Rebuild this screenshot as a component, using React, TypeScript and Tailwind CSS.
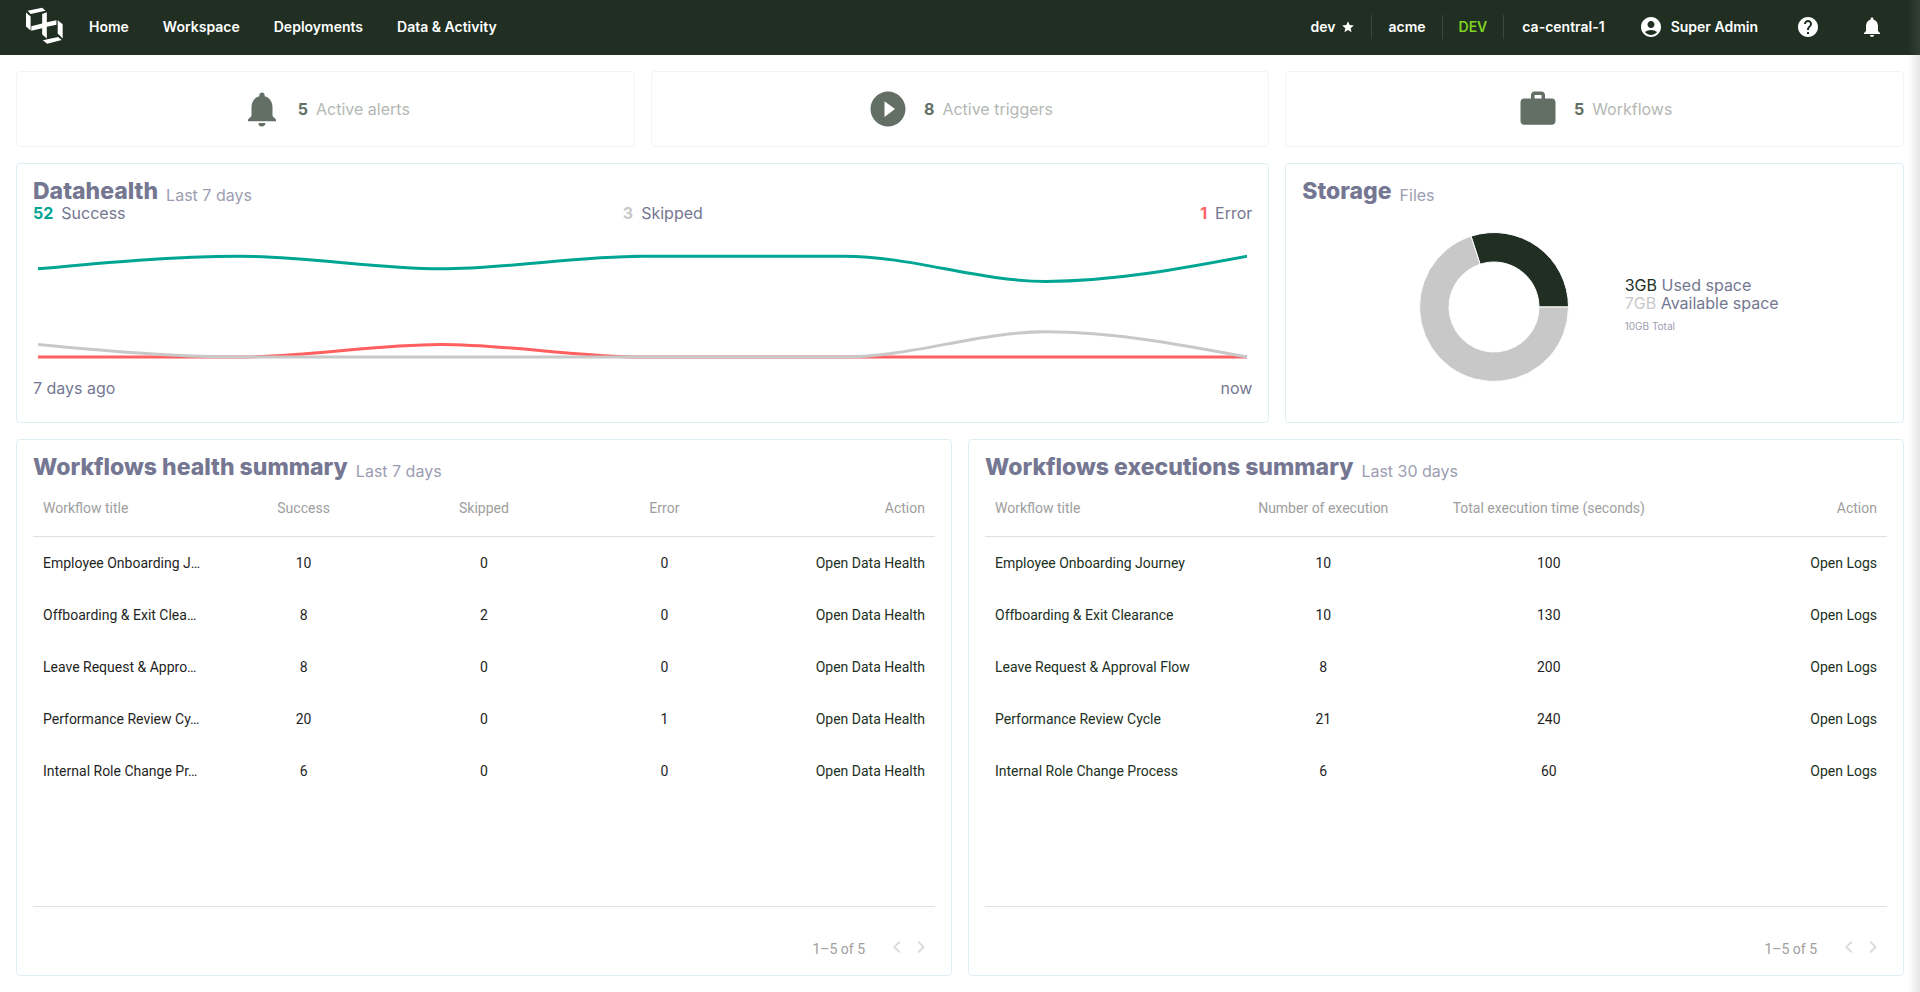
import type { ReactNode } from "react";
import {
    MdAccountCircle,
    MdHelp,
    MdKeyboardArrowLeft,
    MdKeyboardArrowRight,
    MdNotifications,
    MdPlayCircleFilled,
    MdStar,
    MdWork,
} from "react-icons/md";

const NAV_LINKS = ["Home", "Workspace", "Deployments", "Data & Activity"];

// Titles are shortened for the narrow first column
const HEALTH_ROWS = [
    { title: "Employee Onboarding J…", success: 10, skipped: 0, error: 0 },
    { title: "Offboarding & Exit Clea…", success: 8, skipped: 2, error: 0 },
    { title: "Leave Request & Appro…", success: 8, skipped: 0, error: 0 },
    { title: "Performance Review Cy…", success: 20, skipped: 0, error: 1 },
    { title: "Internal Role Change Pr…", success: 6, skipped: 0, error: 0 },
];

const EXECUTION_ROWS = [
    { title: "Employee Onboarding Journey", count: 10, seconds: 100 },
    { title: "Offboarding & Exit Clearance", count: 10, seconds: 130 },
    { title: "Leave Request & Approval Flow", count: 8, seconds: 200 },
    { title: "Performance Review Cycle", count: 21, seconds: 240 },
    { title: "Internal Role Change Process", count: 6, seconds: 60 },
];

const SERIES = [
    { name: "success", color: "#00a693", values: [7, 8, 7, 8, 8, 6, 8] },
    { name: "error", color: "#ff5f5f", values: [0, 0, 1, 0, 0, 0, 0] },
    { name: "skipped", color: "#c8c8c8", values: [1, 0, 0, 0, 0, 2, 0] },
];

const CHART_WIDTH = 1210;
const CHART_HEIGHT = 157;

// Monotone cubic through the daily values, so the curve never overshoots a point
function linePath(values: number[]) {
    const step = CHART_WIDTH / (values.length - 1);
    const pts = values.map((v, i) => ({ x: i * step, y: 135 - v * 12.6 }));
    const slopes = pts.slice(1).map((p, i) => (p.y - pts[i].y) / step);
    const tangents = pts.map((_, i) => {
        if (i === 0 || i === pts.length - 1) return 0;
        const a = slopes[i - 1];
        const b = slopes[i];
        if (a * b <= 0) return 0;
        return Math.sign(a) * Math.min(Math.abs(a), Math.abs(b), Math.abs(a + b) / 4);
    });
    const last = pts.length - 1;
    tangents[0] = (3 * slopes[0] - tangents[1]) / 2;
    tangents[last] = (3 * slopes[last - 1] - tangents[last - 1]) / 2;

    return pts.reduce((d, p, i) => {
        if (i === 0) return `M${p.x},${p.y}`;
        const prev = pts[i - 1];
        const third = step / 3;
        return `${d}C${prev.x + third},${prev.y + tangents[i - 1] * third},${p.x - third},${p.y - tangents[i] * third},${p.x},${p.y}`;
    }, "");
}

function slicePath(from: number, to: number) {
    const at = (deg: number, r: number) => {
        const rad = (deg * Math.PI) / 180;
        return `${75 + r * Math.cos(rad)},${75 - r * Math.sin(rad)}`;
    };
    const large = to - from > 180 ? 1 : 0;
    return `M${at(from, 74.5)}A74.5,74.5,0,${large},0,${at(to, 74.5)}L${at(to, 45)}A45,45,0,${large},1,${at(from, 45)}Z`;
}

function Logo() {
    return (
        <svg viewBox="48 22 112 112" className="h-[37px] w-[37px]" fill="#fff" aria-hidden="true">
            <path d="M53 33 97 24 107 33 62 43Z" />
            <path d="M48 39 62 51V93L48 81Z" />
            <path d="M97 43 111 38V68L140 62V76L111 82V117L97 105V86L64 94V80L97 72Z" />
            <path d="M144 62 159 74V117L144 102Z" />
            <path d="M99 123 145 113 156 122 112 133Z" />
        </svg>
    );
}

function Header() {
    return (
        <header className="flex h-[55px] items-center bg-[#212f23] pr-7 pb-px pl-[26px] text-sm font-semibold text-white">
            <a href="#" aria-label="Dashboard" className="mb-[4px]">
                <Logo />
            </a>
            <nav className="ml-[26px] flex gap-[34px]">
                {NAV_LINKS.map((label) => (
                    <a key={label} href="#">{label}</a>
                ))}
            </nav>
            <div className="ml-auto flex items-center">
                <div className="flex h-6 items-center divide-x divide-[#3b483d] leading-6">
                    <span className="flex items-center gap-[6px] px-4">
                        dev <MdStar className="size-[14px]" />
                    </span>
                    <span className="px-4">acme</span>
                    <span className="px-4 text-[#7ed321]">DEV</span>
                    <span className="px-[18px]">ca-central-1</span>
                </div>
                <button type="button" className="ml-4 flex items-center gap-2">
                    <MdAccountCircle className="size-6" />
                    Super Admin
                </button>
                <button type="button" aria-label="Help" className="ml-[30px] p-2">
                    <MdHelp className="size-6" />
                </button>
                <button type="button" aria-label="Notifications" className="ml-6 p-2">
                    <MdNotifications className="size-6" />
                </button>
            </div>
        </header>
    );
}

function StatCard({ icon, value, label }: { icon: ReactNode; value: number; label: string }) {
    return (
        <div className="flex h-[76px] items-center justify-center gap-[15px] rounded border border-[#edf5f8] text-[#636f65]">
            {icon}
            <p className="flex gap-2">
                <b>{value}</b>
                <span className="text-[#b3b8b4]">{label}</span>
            </p>
        </div>
    );
}

function Card({ title, subtitle, className = "", children }: {
    title: string;
    subtitle: string;
    className?: string;
    children: ReactNode;
}) {
    return (
        <section className={`flex flex-col rounded border border-[#e1eff5] p-4 leading-[18px] text-[#757792] ${className}`}>
            <div className="flex h-6 shrink-0 gap-2">
                <h2 className="text-[23px] leading-[22px] font-extrabold">{title}</h2>
                <span className="self-end text-[#9c9db2]">{subtitle}</span>
            </div>
            {children}
        </section>
    );
}

function HealthChart() {
    return (
        <>
            <div className="flex justify-between">
                <span className="flex gap-2"><b className="text-[#00a693]">52</b> Success</span>
                <span className="flex gap-2"><b className="text-[#c8c8c8]">3</b> Skipped</span>
                <span className="flex gap-2"><b className="text-[#ff5f5f]">1</b> Error</span>
            </div>
            <div className="px-[5px]">
                <svg
                    viewBox={`0 0 ${CHART_WIDTH} ${CHART_HEIGHT}`}
                    preserveAspectRatio="none"
                    className="h-[157px] w-full"
                    role="img"
                    aria-label="Datahealth"
                >
                    {SERIES.map((s) => (
                        <path
                            key={s.name}
                            d={linePath(s.values)}
                            fill="none"
                            stroke={s.color}
                            strokeWidth={3}
                            vectorEffect="non-scaling-stroke"
                        />
                    ))}
                </svg>
            </div>
            <div className="flex justify-between pb-[9px]">
                <span>7 days ago</span>
                <span>now</span>
            </div>
        </>
    );
}

function StorageChart() {
    return (
        <div className="flex flex-1 items-center justify-center gap-14 pt-1 pl-2">
            <svg viewBox="0 0 150 150" className="size-[150px]" stroke="#fff" role="img" aria-label="Storage">
                <path d={slicePath(0, 108)} fill="#212f23" />
                <path d={slicePath(108, 360)} fill="#c8c8c8" />
            </svg>
            <div className="pb-[6px]">
                <p><span className="text-[#212f23]">3GB</span> Used space</p>
                <p><span className="text-[#c8c8c8]">7GB</span> Available space</p>
                <p className="mt-2 text-[10px] leading-3 text-[#9c9db2]">10GB Total</p>
            </div>
        </div>
    );
}

function DataTable({ columns, children }: { columns: string[]; children: ReactNode }) {
    return (
        <div className="flex flex-1 flex-col font-['Roboto',sans-serif] text-sm leading-5">
            <div className="flex-1">
                <table className="w-full table-fixed">
                    <thead>
                        <tr className="h-14 border-b border-[#e0e0e0] text-[#9e9e9e]">
                            {columns.map((c, i) => (
                                <th
                                    key={c}
                                    className={`px-[10px] font-normal ${i === 0 ? "text-left" : i === columns.length - 1 ? "text-right" : "text-center"}`}
                                >
                                    {c}
                                </th>
                            ))}
                        </tr>
                    </thead>
                    <tbody>{children}</tbody>
                </table>
            </div>
            <div className="flex h-[53px] items-end justify-end border-t border-[#e0e0e0] pr-[2px] text-[#9e9e9e]">
                <span className="mr-5">1–5 of 5</span>
                <button type="button" aria-label="Previous page" disabled className="text-[#dcdcdc]">
                    <MdKeyboardArrowLeft className="size-6" />
                </button>
                <button type="button" aria-label="Next page" disabled className="text-[#dcdcdc]">
                    <MdKeyboardArrowRight className="size-6" />
                </button>
            </div>
        </div>
    );
}

function Cell({ align = "text-center", children }: { align?: string; children: ReactNode }) {
    return <td className={`px-[10px] pt-[2px] whitespace-nowrap ${align}`}>{children}</td>;
}

export default function App() {
    return (
        <div className="relative flex min-h-screen flex-col overflow-x-hidden bg-white font-['Inter',sans-serif]">
            <Header />
            <main className="flex flex-1 flex-col gap-4 p-4">
                <div className="grid grid-cols-3 gap-4">
                    <StatCard icon={<MdNotifications className="size-[42px]" />} value={5} label="Active alerts" />
                    <StatCard icon={<MdPlayCircleFilled className="size-[42px]" />} value={8} label="Active triggers" />
                    <StatCard icon={<MdWork className="size-[42px]" />} value={5} label="Workflows" />
                </div>

                <div className="grid grid-cols-3 gap-4">
                    <Card title="Datahealth" subtitle="Last 7 days" className="col-span-2">
                        <HealthChart />
                    </Card>
                    <Card title="Storage" subtitle="Files">
                        <StorageChart />
                    </Card>
                </div>

                <div className="grid flex-1 grid-cols-2 gap-4">
                    <Card title="Workflows health summary" subtitle="Last 7 days">
                        <DataTable columns={["Workflow title", "Success", "Skipped", "Error", "Action"]}>
                            {HEALTH_ROWS.map((row) => (
                                <tr key={row.title} className="h-[52px] text-[#1f1f1f]">
                                    <Cell align="text-left">{row.title}</Cell>
                                    <Cell>{row.success}</Cell>
                                    <Cell>{row.skipped}</Cell>
                                    <Cell>{row.error}</Cell>
                                    <Cell align="text-right">
                                        <a href="#" className="text-[#212f23]">Open Data Health</a>
                                    </Cell>
                                </tr>
                            ))}
                        </DataTable>
                    </Card>
                    <Card title="Workflows executions summary" subtitle="Last 30 days">
                        <DataTable columns={["Workflow title", "Number of execution", "Total execution time (seconds)", "Action"]}>
                            {EXECUTION_ROWS.map((row) => (
                                <tr key={row.title} className="h-[52px] text-[#1f1f1f]">
                                    <Cell align="text-left">
                                        <a href="#" className="text-[#212f23]">{row.title}</a>
                                    </Cell>
                                    <Cell>{row.count}</Cell>
                                    <Cell>{row.seconds}</Cell>
                                    <Cell align="text-right">
                                        <a href="#" className="text-[#212f23]">Open Logs</a>
                                    </Cell>
                                </tr>
                            ))}
                        </DataTable>
                    </Card>
                </div>
            </main>

            {/* Edge shadow of the collapsed side drawer */}
            <div className="pointer-events-none absolute inset-y-0 right-0 w-3 bg-linear-to-l from-[#808080]/20 to-transparent" />
        </div>
    );
}
